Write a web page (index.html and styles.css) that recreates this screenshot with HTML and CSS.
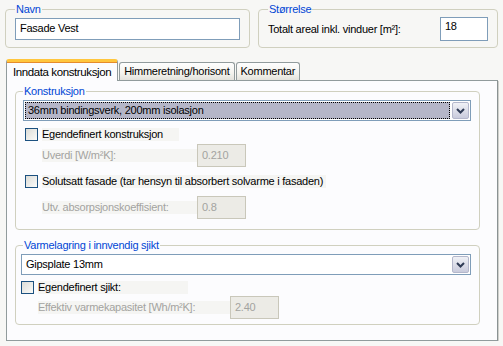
FILE: index.html
```html
<!DOCTYPE html>
<html>
<head>
  <meta charset="utf-8">
  <title>Fasade</title>
  <link rel="stylesheet" href="styles.css">
</head>
<body>

  <!-- Navn / Størrelse -->
  <div class="top">
    <fieldset class="group navn">
      <legend>Navn</legend>
      <div class="field wide">Fasade Vest</div>
    </fieldset>
    <fieldset class="group size">
      <legend>Størrelse</legend>
      <div class="row spread">
        <span>Totalt areal inkl. vinduer [m²]:</span>
        <div class="field small">18</div>
      </div>
    </fieldset>
  </div>

  <!-- Tabs -->
  <div class="tabs">
    <div class="tab active">Inndata konstruksjon</div>
    <div class="tab">Himmeretning/horisont</div>
    <div class="tab">Kommentar</div>
  </div>

  <div class="panel">
    <fieldset class="group konstr">
      <legend>Konstruksjon</legend>
      <div class="combo focus">
        <div class="combo-text"><span>36mm bindingsverk, 200mm isolasjon</span></div>
        <div class="combo-btn">
          <svg width="9" height="6" viewBox="0 0 9 6"><path d="M1 1 L4.5 4.5 L8 1" fill="none" stroke="#2f3b55" stroke-width="2"/></svg>
        </div>
      </div>
      <div class="check-row first">
        <span class="box"></span>
        <span class="check-label l1">Egendefinert konstruksjon</span>
      </div>
      <div class="row sub">
        <span class="dim l2">Uverdi [W/m²K]:</span>
        <div class="field off">0.210</div>
      </div>
      <div class="check-row second">
        <span class="box"></span>
        <span class="check-label">Solutsatt fasade (tar hensyn til absorbert solvarme i fasaden)</span>
      </div>
      <div class="row sub last">
        <span class="dim l3">Utv. absorpsjonskoeffisient:</span>
        <div class="field off">0.8</div>
      </div>
    </fieldset>

    <fieldset class="group varme">
      <legend>Varmelagring i innvendig sjikt</legend>
      <div class="combo">
        <div class="combo-text"><span>Gipsplate 13mm</span></div>
        <div class="combo-btn">
          <svg width="9" height="6" viewBox="0 0 9 6"><path d="M1 1 L4.5 4.5 L8 1" fill="none" stroke="#2f3b55" stroke-width="2"/></svg>
        </div>
      </div>
      <div class="check-row third">
        <span class="box"></span>
        <span class="check-label l4">Egendefinert sjikt:</span>
      </div>
      <div class="row sub2">
        <span class="dim l5">Effektiv varmekapasitet [Wh/m²K]:</span>
        <div class="field off">2.40</div>
      </div>
    </fieldset>
  </div>

</body>
</html>
```

FILE: styles.css
```css
body {
  margin: 0;
  background: #f7f7f5;
  color: #000;
  font-family: "Liberation Sans", Tahoma, sans-serif;
  font-size: 11px;
  line-height: 13px;
  letter-spacing: -0.25px;
}
.top {
  display: flex;
  gap: 8px;
  padding: 3px 0 0 5px;
}
.group {
  margin: 0;
  border: 1px solid #d0d0bf;
  border-radius: 4px;
  box-sizing: border-box;
}
.group legend {
  color: #0046d5;
  padding: 0 1px;
  margin-left: 0;
  line-height: 13px;
}
.navn {
  width: 245px;
  height: 45px;
  padding: 2px 9px 0 9px;
}
.size {
  width: 240px;
  height: 45px;
  padding: 1px 9px 0 9px;
}
.field {
  box-sizing: border-box;
  border: 1px solid #7f9db9;
  background: #fff;
  padding: 3px 4px;
}
.field.wide {
  width: 225px;
  height: 22px;
}
.field.small {
  width: 48px;
  height: 24px;
  padding-top: 2px;
}
.row {
  display: flex;
  align-items: center;
}
.row.spread {
  justify-content: space-between;
}

/* tabs */
.tabs {
  display: flex;
  align-items: flex-end;
  margin: 11px 0 0 6px;
  height: 21px;
  position: relative;
  z-index: 1;
}
.tab {
  box-sizing: border-box;
  height: 18px;
  padding: 2px 4px 0 4px;
  border: 1px solid #919b9c;
  border-bottom: none;
  border-radius: 3px 3px 0 0;
  background: linear-gradient(#fefefe, #f4f3ee 60%, #e3e2dc);
}
.tab.active {
  height: 22px;
  margin: 0 0 -1px 0;
  padding: 4px 6px 0 6px;
  background: #fcfcfe;
  border-top: 3px solid #ffc63d;
  box-shadow: inset 0 1px 0 #e68b2c;
  font-size: 11.5px;
  letter-spacing: -0.4px;
}
.tab + .tab {
  margin-left: 1px;
}
.panel {
  box-sizing: border-box;
  margin-left: 6px;
  width: 492px;
  height: 261px;
  border: 1px solid #919b9c;
  border-right-color: #8a9293;
  box-shadow: 1px 1px 0 #d0d0cc;
  background: #fcfcfe;
  padding: 4px 0 0 8px;
}
.konstr {
  width: 465px;
  height: 145px;
  padding: 2px 8px 0 7px;
}
.varme {
  width: 465px;
  height: 86px;
  margin-top: 9px;
  padding: 2px 8px 0 5px;
}
.varme legend {
  margin-left: 2px;
}

/* combo box */
.combo {
  display: flex;
  box-sizing: border-box;
  height: 21px;
  border: 1px solid #7f9db9;
  background: #fff;
}
.combo-text {
  flex: 1;
  padding: 1px;
}
.combo-text span {
  display: block;
  height: 17px;
  box-sizing: border-box;
  padding: 2px 3px;
}
.combo.focus .combo-text span {
  background: #b5b6c8;
  border: 1px dotted #000;
  padding: 1px 2px;
}
.combo-btn {
  width: 17px;
  margin: 1px;
  box-sizing: border-box;
  border: 1px solid #b4b7cb;
  border-radius: 2px;
  background: linear-gradient(#f0f1f6, #c9cbdc);
  display: flex;
  align-items: center;
  justify-content: center;
}

/* checkboxes */
.check-row {
  display: flex;
  align-items: center;
  height: 16px;
  gap: 4px;
}
.check-row.first {
  margin: 5px 0 0 2px;
}
.check-row.second {
  margin: 6px 0 0 2px;
}
.check-row.third {
  margin: 4px 0 0 0;
}
.box {
  box-sizing: border-box;
  width: 13px;
  height: 13px;
  border: 1px solid #1c5180;
  background: linear-gradient(135deg, #dcdcd7, #fbfbf9);
}
.check-label {
  background: #f5f5f3;
  padding-right: 3px;
}
.check-label.l1 {
  width: 134px;
}
.check-label.l4 {
  width: 147px;
}
.dim {
  color: #a3a3a0;
  background: #f5f5f3;
  padding-right: 3px;
}
.row.sub {
  margin: 2px 0 0 19px;
  height: 23px;
}
.row.sub.last {
  margin-top: 7px;
}
.row.sub2 {
  margin: 1px 0 0 17px;
  height: 23px;
}
.dim.l2,
.dim.l3 {
  width: 155px;
  box-sizing: border-box;
}
.dim.l5 {
  width: 192px;
  box-sizing: border-box;
}
.field.off {
  width: 49px;
  height: 23px;
  border-color: #c9c7ba;
  background: #ecebe6;
  color: #a3a3a0;
  padding-top: 4px;
}
```
